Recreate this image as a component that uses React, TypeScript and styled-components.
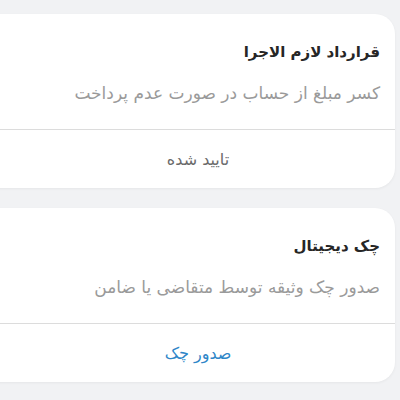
import React from "react";
import styled, { createGlobalStyle } from "styled-components";

const GlobalStyle = createGlobalStyle`
  html, body {
    margin: 0;
    padding: 0;
    background: #f1f2f4;
    overflow: hidden;
  }
`;

const Page = styled.div`
  width: 400px;
  height: 400px;
  padding-top: 14px;
  box-sizing: border-box;
  display: flex;
  flex-direction: column;
  gap: 20px;
  direction: rtl;
  font-family: "DejaVu Sans", sans-serif;
`;

const Card = styled.section`
  width: 420px;
  margin-right: 5px;
  background: #ffffff;
  border-radius: 20px;
  box-shadow: 0 1px 3px rgba(0, 0, 0, 0.05);
  display: flex;
  flex-direction: column;
`;

const Body = styled.div`
  padding: 26px 15px 24px;
  display: flex;
  flex-direction: column;
  gap: 17px;
`;

const Title = styled.h3`
  margin: 0;
  font-size: 15px;
  line-height: 24px;
  font-weight: bold;
  color: #262626;
`;

const Subtitle = styled.p`
  margin: 0;
  font-size: 17px;
  line-height: 24px;
  color: #9a9a9a;
`;

const Footer = styled.button`
  border: none;
  border-top: 1px solid #dcdcdc;
  background: transparent;
  height: 59px;
  display: flex;
  align-items: center;
  justify-content: center;
  padding: 0 0 0 26px;
  font-family: inherit;
  font-size: 16px;
  color: ${(props: { $active?: boolean }) => (props.$active ? "#2e86c8" : "#6a6a6a")};
  cursor: pointer;
`;

type ContractCardProps = {
  title: string;
  description: string;
  action: string;
  active?: boolean;
};

const ContractCard = ({ title, description, action, active }: ContractCardProps) => (
  <Card>
    <Body>
      <Title>{title}</Title>
      <Subtitle>{description}</Subtitle>
    </Body>
    <Footer $active={active}>{action}</Footer>
  </Card>
);

export default function App() {
  return (
    <>
      <GlobalStyle />
      <Page>
        <ContractCard
          title="قرارداد لازم الاجرا"
          description="کسر مبلغ از حساب در صورت عدم پرداخت"
          action="تایید شده"
        />
        <ContractCard
          title="چک دیجیتال"
          description="صدور چک وثیقه توسط متقاضی یا ضامن"
          action="صدور چک"
          active
        />
      </Page>
    </>
  );
}
